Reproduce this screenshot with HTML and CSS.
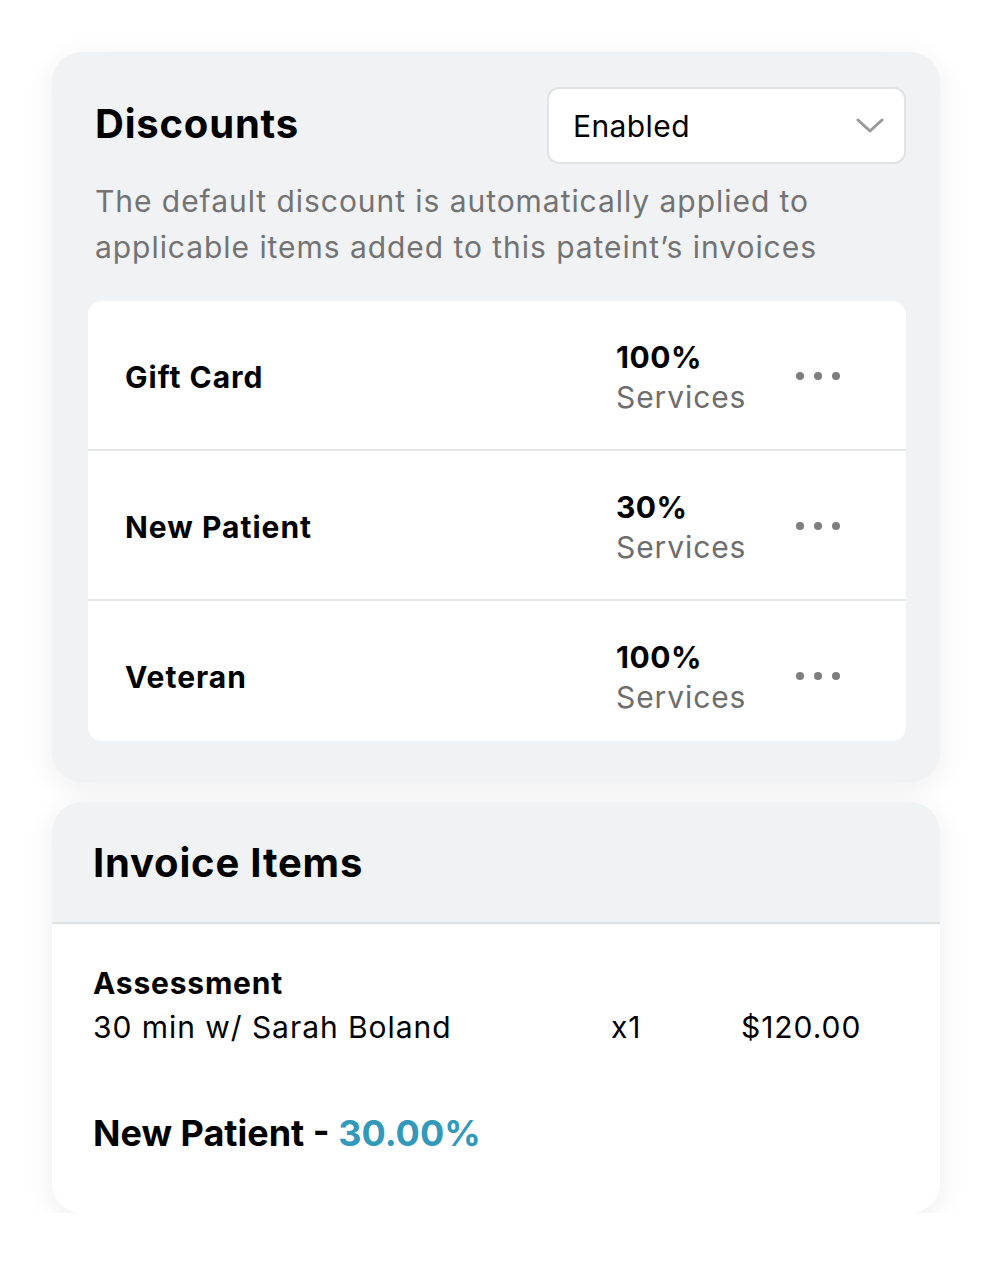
FILE: index.html
```html
<!DOCTYPE html>
<html lang="en">
<head>
    <meta charset="UTF-8">
    <meta name="viewport" content="width=device-width, initial-scale=1.0">
    <title>Patient Discounts</title>
    <link rel="stylesheet" href="styles.css">
</head>
<body>
    <div class="page">
        <section class="card discounts">
            <div class="discounts-head">
                <h2>Discounts</h2>
                <div class="select">
                    <span>Enabled</span>
                    <svg class="chevron" width="28" height="16" viewBox="0 0 28 16">
                        <path d="M2 2 L14 13 L26 2" fill="none" stroke="#9a9a9a" stroke-width="3" stroke-linecap="round" stroke-linejoin="round"/>
                    </svg>
                </div>
            </div>
            <p class="hint">The default discount is automatically applied to applicable items added to this pateint’s invoices</p>

            <div class="discount-list">
                <div class="discount-row">
                    <div class="discount-name">Gift Card</div>
                    <div class="discount-amount">
                        <strong>100%</strong>
                        <span>Services</span>
                    </div>
                    <div class="more"><i></i><i></i><i></i></div>
                </div>
                <div class="discount-row">
                    <div class="discount-name">New Patient</div>
                    <div class="discount-amount">
                        <strong>30%</strong>
                        <span>Services</span>
                    </div>
                    <div class="more"><i></i><i></i><i></i></div>
                </div>
                <div class="discount-row">
                    <div class="discount-name">Veteran</div>
                    <div class="discount-amount">
                        <strong>100%</strong>
                        <span>Services</span>
                    </div>
                    <div class="more"><i></i><i></i><i></i></div>
                </div>
            </div>
        </section>

        <section class="card invoice">
            <div class="invoice-head">
                <h2>Invoice Items</h2>
            </div>
            <div class="invoice-body">
                <div class="item">
                    <div class="item-info">
                        <strong>Assessment</strong>
                        <span>30 min w/ Sarah Boland</span>
                    </div>
                    <div class="item-qty">x1</div>
                    <div class="item-price">$120.00</div>
                </div>
                <div class="applied">New Patient - <span class="rate">30.00%</span></div>
            </div>
        </section>
    </div>
</body>
</html>
```

FILE: styles.css
```css
* {
    box-sizing: border-box;
}

body {
    margin: 0;
    background: #ffffff;
    font-family: Inter, "Noto Sans", Arial, sans-serif;
    color: #000;
}

.page {
    width: 888px;
    margin: 52px 0 0 52px;
    display: flex;
    flex-direction: column;
    gap: 20px;
}

.card {
    background: #f1f2f4;
    border-radius: 30px;
    box-shadow: 0 6px 30px rgba(0, 0, 0, 0.07);
    overflow: hidden;
}

h2 {
    margin: 0;
    font-size: 40px;
    font-weight: 700;
    letter-spacing: 0.8px;
}

/* discounts card */
.discounts {
    padding: 35px 34px 41px 36px;
}

.discounts-head {
    display: flex;
    justify-content: space-between;
    align-items: center;
    padding-left: 7px;
}

.discounts-head h2 {
    margin-top: -4px;
}

.select {
    width: 359px;
    height: 77px;
    background: #fff;
    border: 2px solid #e2e3e5;
    border-radius: 12px;
    display: flex;
    align-items: center;
    justify-content: space-between;
    padding: 0 20px 0 24px;
    font-size: 30px;
    letter-spacing: 0.4px;
}

.hint {
    margin: 14px 0 31px 7px;
    font-size: 30px;
    line-height: 46px;
    letter-spacing: 0.95px;
    color: #737373;
}

.discount-list {
    background: #fff;
    border-radius: 14px;
}

.discount-row {
    height: 150px;
    display: flex;
    align-items: center;
    padding: 4px 66px 0 37px;
    border-bottom: 2px solid #e6e7e9;
}

.discount-row:last-child {
    height: 140px;
    padding-top: 12px;
    border-bottom: none;
}

.discount-name {
    flex: 1;
    font-size: 30px;
    font-weight: 700;
    letter-spacing: 1px;
}

.discount-amount {
    width: 180px;
    display: flex;
    flex-direction: column;
    font-size: 30px;
    line-height: 40px;
    letter-spacing: 0.9px;
}

.discount-amount strong {
    letter-spacing: 0.5px;
}

.discount-amount span {
    color: #6d6d6d;
}

.more {
    display: flex;
    gap: 10px;
    margin-bottom: 2px;
}

.more i {
    width: 8px;
    height: 8px;
    border-radius: 50%;
    background: #7e7e7e;
}

/* invoice card */
.invoice {
    background: #fff;
}

.invoice-head {
    background: #f1f2f4;
    height: 122px;
    display: flex;
    align-items: center;
    padding-left: 41px;
    border-bottom: 2px solid #dfe0e2;
}

.invoice-body {
    padding: 37px 41px 58px;
}

.item {
    display: flex;
    align-items: flex-end;
    font-size: 30px;
    letter-spacing: 0.95px;
}

.item-info {
    flex: 1;
    display: flex;
    flex-direction: column;
    line-height: 44px;
}

.item-info strong {
    letter-spacing: 0.8px;
}

.item-qty {
    width: 130px;
    line-height: 44px;
}

.item-price {
    width: 158px;
    line-height: 44px;
}

.applied {
    margin-top: 62px;
    font-size: 36px;
    font-weight: 700;
}

.applied .rate {
    color: #3399bb;
}
```
